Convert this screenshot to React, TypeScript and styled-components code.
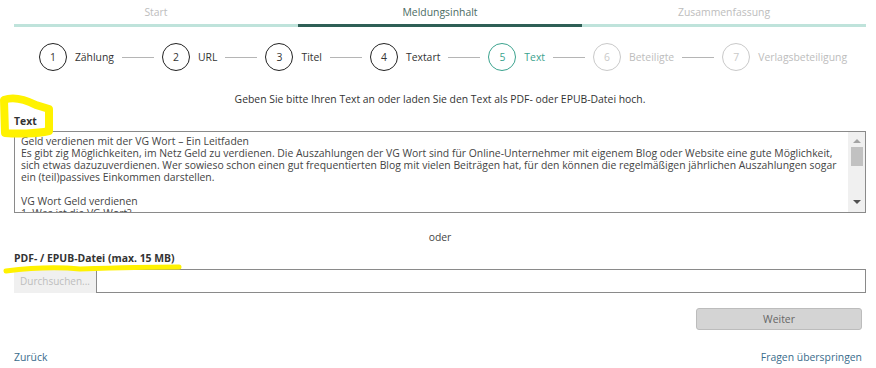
import React from 'react';
import styled, { createGlobalStyle } from 'styled-components';

const GlobalStyle = createGlobalStyle`
  html, body {
    margin: 0;
    padding: 0;
    background: #fff;
  }

  body {
    font-family: 'Open Sans', 'DejaVu Sans', sans-serif;
    font-size: 10.4px;
    color: #333;
  }
`;

const Page = styled.div`
  position: relative;
  width: 876px;
  height: 368px;
  padding: 0 10px 0 14px;
  box-sizing: border-box;
  overflow: hidden;
`;

const TabBar = styled.div`
  display: grid;
  grid-template-columns: repeat(3, 1fr);
`;

const Tab = styled.div<{ $active?: boolean }>`
  padding: 5px 0 5px;
  line-height: 14px;
  text-align: center;
  color: ${(p) => (p.$active ? '#4b6b64' : '#bdbdbd')};
  border-bottom: 3px solid ${(p) => (p.$active ? '#2f5f56' : '#bfe3db')};
`;

const Steps = styled.div`
  display: flex;
  justify-content: center;
  align-items: center;
  gap: 8px;
  margin-top: 16px;
  padding-left: 6px;
`;

type StepState = 'done' | 'active' | 'todo';

const stepColor = (s: StepState) =>
  s === 'done' ? '#222' : s === 'active' ? '#3ba38e' : '#c9c9c9';

const Circle = styled.div<{ $state: StepState }>`
  width: 26px;
  height: 26px;
  border-radius: 50%;
  border: 1px solid ${(p) => stepColor(p.$state)};
  color: ${(p) => (p.$state === 'done' ? '#333' : stepColor(p.$state))};
  display: flex;
  align-items: center;
  justify-content: center;
  line-height: 1;
`;

const StepLabel = styled.span<{ $state: StepState }>`
  color: ${(p) => (p.$state === 'done' ? '#333' : p.$state === 'active' ? '#3ba38e' : '#bdbdbd')};
  line-height: 14px;
`;

const Connector = styled.div`
  width: 32px;
  height: 1px;
  background: #b5b5b5;
`;

const Intro = styled.p`
  margin: 21px 0 0;
  line-height: 14px;
  text-align: center;
  color: #333;
`;

const FieldLabel = styled.div<{ $gap: number }>`
  margin-top: ${(p) => p.$gap}px;
  line-height: 14px;
  font-weight: 700;
  color: #333;
`;

const TextBox = styled.div`
  margin-top: 3px;
  height: 82px;
  box-sizing: border-box;
  border: 1px solid #8a8a8a;
  display: flex;
`;

const TextArea = styled.textarea`
  flex: 1;
  margin: 0;
  border: none;
  outline: none;
  resize: none;
  overflow: hidden;
  padding: 3px 6px 0 6px;
  font-family: inherit;
  font-size: 10.4px;
  line-height: 12px;
  color: #444;
  background: #fff;
`;

const Scrollbar = styled.div`
  width: 17px;
  background: #f0f0f0;
  display: flex;
  flex-direction: column;
  align-items: center;
`;

const Arrow = styled.div<{ $dir: 'up' | 'down' }>`
  margin: ${(p) => (p.$dir === 'up' ? '7px 0 4px' : 'auto 0 8px')};
  width: 0;
  height: 0;
  border-left: 4px solid transparent;
  border-right: 4px solid transparent;
  ${(p) =>
    p.$dir === 'up'
      ? 'border-bottom: 4px solid #a3a3a3;'
      : 'border-top: 4px solid #505050;'}
`;

const Thumb = styled.div`
  width: 12px;
  height: 19px;
  background: #c1c1c1;
`;

const Or = styled.div`
  margin-top: 17px;
  line-height: 14px;
  text-align: center;
  color: #444;
`;

const FileRow = styled.div`
  margin-top: 4px;
  display: flex;
  height: 24px;
`;

const BrowseButton = styled.button`
  width: 82px;
  border: none;
  background: #f0f0f0;
  color: #bdbdbd;
  font-family: inherit;
  font-size: 10px;
  padding: 0;
`;

const FileField = styled.div`
  flex: 1;
  border: 1px solid #8a8a8a;
`;

const Actions = styled.div`
  margin-top: 15px;
  display: flex;
  justify-content: flex-end;
  padding-right: 4px;
`;

const NextButton = styled.button`
  width: 166px;
  height: 22px;
  border: 1px solid #bcbcbc;
  border-radius: 3px;
  background: #d4d4d4;
  color: #666;
  font-family: inherit;
  font-size: 10.4px;
`;

const Footer = styled.div`
  margin-top: 20px;
  display: flex;
  justify-content: space-between;
  padding-right: 4px;
  line-height: 14px;
`;

const Link = styled.a`
  color: #3a6c8c;
  text-decoration: none;
`;

const Marker = styled.svg`
  position: absolute;
  left: 0;
  top: 0;
  pointer-events: none;
`;

const steps: { label: string; state: StepState }[] = [
  { label: 'Zählung', state: 'done' },
  { label: 'URL', state: 'done' },
  { label: 'Titel', state: 'done' },
  { label: 'Textart', state: 'done' },
  { label: 'Text', state: 'active' },
  { label: 'Beteiligte', state: 'todo' },
  { label: 'Verlagsbeteiligung', state: 'todo' },
];

const articleText =
  'Geld verdienen mit der VG Wort – Ein Leitfaden\n' +
  'Es gibt zig Möglichkeiten, im Netz Geld zu verdienen. Die Auszahlungen der VG Wort sind für Online-Unternehmer mit eigenem Blog oder Website eine gute Möglichkeit, sich etwas dazuzuverdienen. Wer sowieso schon einen gut frequentierten Blog mit vielen Beiträgen hat, für den können die regelmäßigen jährlichen Auszahlungen sogar ein (teil)passives Einkommen darstellen.\n' +
  '\n' +
  'VG Wort Geld verdienen\n' +
  '1. Was ist die VG Wort?\n' +
  '2. Wie funktioniert die VG Wort?\n';

const App = () => {
  return (
    <Page>
      <GlobalStyle />
      <TabBar>
        <Tab>Start</Tab>
        <Tab $active>Meldungsinhalt</Tab>
        <Tab>Zusammenfassung</Tab>
      </TabBar>

      <Steps>
        {steps.map((s, i) => (
          <React.Fragment key={s.label}>
            {i > 0 && <Connector />}
            <Circle $state={s.state}>{i + 1}</Circle>
            <StepLabel $state={s.state}>{s.label}</StepLabel>
          </React.Fragment>
        ))}
      </Steps>

      <Intro>
        Geben Sie bitte Ihren Text an oder laden Sie den Text als PDF- oder EPUB-Datei hoch.
      </Intro>

      <FieldLabel $gap={8}>Text</FieldLabel>
      <TextBox>
        <TextArea defaultValue={articleText} readOnly />
        <Scrollbar>
          <Arrow $dir="up" />
          <Thumb />
          <Arrow $dir="down" />
        </Scrollbar>
      </TextBox>

      <Or>oder</Or>

      <FieldLabel $gap={7}>PDF- / EPUB-Datei (max. 15 MB)</FieldLabel>
      <FileRow>
        <BrowseButton>Durchsuchen...</BrowseButton>
        <FileField />
      </FileRow>

      <Actions>
        <NextButton>Weiter</NextButton>
      </Actions>

      <Footer>
        <Link href="#">Zurück</Link>
        <Link href="#">Fragen überspringen</Link>
      </Footer>

      {/* yellow hand-drawn annotations from the screenshot */}
      <Marker width="876" height="368" viewBox="0 0 876 368">
        <path
          d="M4 100 C 14 96, 26 100, 36 105 L 49 109 L 49 131 C 36 134, 16 134, 5 133 Z"
          fill="none"
          stroke="#fff200"
          strokeWidth="8"
          strokeLinejoin="round"
          strokeLinecap="round"
        />
        <path
          d="M6 271 C 30 268, 60 267, 80 269 C 110 268, 150 267, 179 267"
          fill="none"
          stroke="#fff200"
          strokeWidth="5"
          strokeLinecap="round"
        />
      </Marker>
    </Page>
  );
};

export default App;
